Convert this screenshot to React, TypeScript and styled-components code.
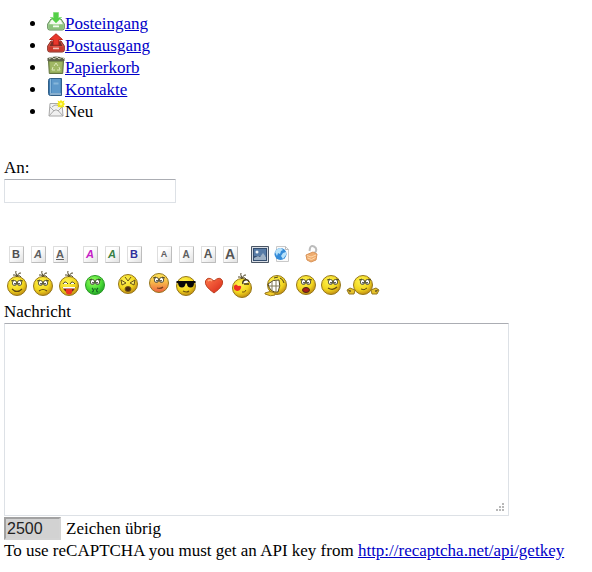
import React from 'react';
import styled, { createGlobalStyle } from 'styled-components';

const GlobalStyle = createGlobalStyle`
  body {
    margin: 0;
    background: #fff;
    color: #000;
    font-family: "Liberation Serif", "Times New Roman", serif;
    font-size: 17px;
    line-height: 22px;
  }
`;

const Page = styled.main`
  padding: 11px 4px 8px;
`;

const Folders = styled.ul`
  margin: 0;
  padding: 0 0 0 43px;
`;

const Folder = styled.li`
  height: 22px;
  white-space: nowrap;

  svg {
    width: 18px;
    height: 20px;
    vertical-align: -2px;
  }
`;

const Link = styled.a`
  color: #0000c8;
  text-decoration: underline;
`;

const Form = styled.form`
  display: flex;
  flex-direction: column;
  align-items: flex-start;
  margin-top: 36px;
`;

const Label = styled.label`
  display: block;
`;

const Recipient = styled.input`
  box-sizing: border-box;
  width: 172px;
  height: 24px;
  padding: 2px 4px;
  border: 1px solid #dde1e6;
  border-top-color: #abadb3;
  border-radius: 1px;
  font: 16px "Liberation Sans", Arial, sans-serif;
`;

const Toolbar = styled.div`
  display: flex;
  gap: 8px;
  margin-top: 40px;
  padding-left: 1px;
`;

const ToolGroup = styled.div`
  display: flex;
`;

const IconButton = styled.button<{ $width: number; $height: number }>`
  display: flex;
  justify-content: center;
  align-items: center;
  width: ${p => p.$width}px;
  height: ${p => p.$height}px;
  padding: 0;
  border: 0;
  background: none;
  cursor: pointer;
`;

const Letter = styled.span<{ $color: string; $size: number; $italic?: boolean; $underline?: boolean }>`
  box-sizing: border-box;
  width: 15px;
  height: 17px;
  border: 1px solid #dedede;
  border-right-color: #bdbdbd;
  border-bottom-color: #bdbdbd;
  border-radius: 1px;
  background: linear-gradient(135deg, #fff 35%, #e2e2e2);
  color: ${p => p.$color};
  font: ${p => (p.$italic ? 'italic' : 'normal')} bold ${p => p.$size}px/15px "Liberation Sans", Arial, sans-serif;
  text-align: center;
  text-decoration: ${p => (p.$underline ? 'underline' : 'none')};
`;

const Smileys = styled.div`
  display: flex;
  margin: 7px 0 1px;

  svg {
    flex: none;
    overflow: visible;
  }
`;

const Palette = styled.svg`
  position: absolute;
  width: 0;
  height: 0;
`;

const MessageBox = styled.div`
  position: relative;
  width: 505px;
  max-width: 100%;
`;

const Message = styled.textarea`
  display: block;
  box-sizing: border-box;
  width: 100%;
  height: 193px;
  margin: 0;
  padding: 4px;
  border: 1px solid #dde1e6;
  border-top-color: #abadb3;
  border-radius: 1px;
  resize: none;
  font: 16px "Liberation Sans", Arial, sans-serif;
`;

const Grip = styled.svg`
  position: absolute;
  right: 5px;
  bottom: 5px;
  pointer-events: none;
`;

const CounterRow = styled.div`
  display: flex;
  align-items: center;
  gap: 5px;
  margin-top: 1px;
`;

const Counter = styled.input`
  box-sizing: border-box;
  width: 57px;
  height: 23px;
  padding: 1px;
  border: 2px solid #d4d4d4;
  border-top-color: #a2a2a2;
  border-left-color: #a2a2a2;
  background: #d2d2d2;
  color: #222;
  font: 16px "Liberation Sans", Arial, sans-serif;
`;

const Notice = styled.p`
  margin: 0;
`;

function Tray({ kind }: { kind: 'in' | 'out' }) {
  const incoming = kind === 'in';
  const edge = incoming ? '#5f8b55' : '#842b20';
  return (
    <svg viewBox="0 0 18 20" aria-hidden="true">
      <path d="M4 8h10l3.3 5v4q0 2-2 2H2.7q-2 0-2-2v-4z" fill={incoming ? '#b5dda8' : '#df584b'} stroke={edge} />
      <path d="M4.5 9h9l2 4H2.5z" fill={incoming ? '#f4faf0' : '#793027'} />
      <path d="M1.5 13.5h4l1.5 2h4l1.5-2h4v3.2q0 1.3-1.3 1.3H2.8q-1.3 0-1.3-1.3z" fill={incoming ? '#8cc37c' : '#c83b2d'} />
      <path d="M6 15.500h6" stroke={incoming ? '#f2faef' : '#f0c0b5'} strokeWidth="1.500" />
      {incoming ? (
        <path d="M6.5 1.5h5v5h3L9 12 3.5 6.5h3z" fill="#55cf48" stroke="#8be080" />
      ) : (
        <path d="M6.5 12V6.5h-4L9 .8l6.5 5.7h-4V12z" fill="#e9372b" stroke="#bc281e" />
      )}
    </svg>
  );
}

function BinIcon() {
  return (
    <svg viewBox="0 0 18 20" aria-hidden="true">
      <path d="M1.5 6h15l-.8 12.5H2.3z" fill="#91a858" stroke="#647441" />
      <path d="M3 7h12l-.5 10h-11z" fill="#a0b764" />
      <path d="M.5 3q8.500-3 17 0v3H.5z" fill="#5e634b" />
      <path d="M2 4l3-2 2 2 3-2 2 2 3-2 2 2" fill="none" stroke="#d0d2bd" />
      <path d="M7 11l2-3 2 3M12 12l1 3h-3M8 15H5l1-3" fill="none" stroke="#dce7b8" />
    </svg>
  );
}

function BookIcon() {
  return (
    <svg viewBox="0 0 18 20" aria-hidden="true">
      <path d="M1.500 3.500q0-2 2-2h11v17H3.500q-2 0-2-2z" fill="#3b78ad" stroke="#315f88" />
      <path d="M4.500 2h9v14h-9z" fill="#5e99ca" />
      <path d="M6.500 5.500h5v2h-5z" fill="#86b6da" />
      <path d="M3 17h11" stroke="#d9e6ef" />
      <path d="M3.500 2v14" stroke="#8dbbdd" />
    </svg>
  );
}

function NewMailIcon() {
  return (
    <svg viewBox="0 0 18 20" aria-hidden="true">
      <path d="M3 4.500h12l1 12.500H2z" fill="#f0f0f0" stroke="#a8a8a8" />
      <path d="M2 17l4.500-5Q9 9.500 11.500 12l4.500 5M3 8l4 4M15 8l-4 4M5 8q4-4 8 0" fill="none" stroke="#aaa" />
      <path d="M14 .5l1 2 2.500-1-1 2.500 2 1-2 1 1 2.500-2.500-1-1 2-1-2-2.500 1 1-2.500-2-1 2-1-1-2.500 2.500 1z" fill="#f5e800" />
      <circle cx="14" cy="5" r="1.500" fill="#fff989" />
    </svg>
  );
}

function PictureIcon() {
  return (
    <svg width="18" height="17" aria-hidden="true">
      <path d="M.5.5h17v16H.5z" fill="#d8dde4" stroke="#4b5665" />
      <path d="M2 2h14v13H2z" fill="#344d6f" />
      <path d="M3 3h12v7H3z" fill="#577ba6" />
      <circle cx="6" cy="6" r="1.500" fill="#f1f4f5" />
      <path d="M3 12l4-2 2 1 3-4 3 4v3H3z" fill="#9eb1c5" />
    </svg>
  );
}

function WebIcon() {
  return (
    <svg width="18" height="18" aria-hidden="true">
      <path d="M3.500 1.500h9l3 3v12h-12z" fill="#fbfbfb" stroke="#c9c9c9" />
      <path d="M12.500 1.500v3h3" fill="none" stroke="#bbb" />
      <circle cx="7.500" cy="9" r="6" fill="#348bd8" />
      <path d="M2 7q2-4 6-4l2 2-2 1-1 3-2-1-1 3zM10 8l3-1v3l-3 4-2-3z" fill="#b8e2fa" />
    </svg>
  );
}

function UnlockIcon() {
  return (
    <svg width="18" height="18" aria-hidden="true">
      <path d="M11 9l2-3q1-3-2-4.500T7 3l-.5 3" fill="none" stroke="#bcbcbc" strokeWidth="2" />
      <path d="M3 10l7-3 4 2-1 6-5 2-4-2z" fill="#efad70" stroke="#d99459" />
      <path d="M4 10.500l4 1.500 5-2M4.500 13l4 1.500 4-2" fill="none" stroke="#ffd8aa" />
    </svg>
  );
}

type Mood =
  | 'smile' | 'sad' | 'tongue' | 'sick' | 'angry' | 'blush' | 'cool'
  | 'heart' | 'kiss' | 'laugh' | 'shock' | 'happy' | 'shrug';

function Eyes({ x = 13, y = 11 }: { x?: number; y?: number }) {
  return (
    <g stroke="#302f22" strokeWidth=".8">
      <ellipse cx={x - 2.5} cy={y} rx="2.200" ry="2.500" fill="#fff" />
      <ellipse cx={x + 2.5} cy={y} rx="2.200" ry="2.500" fill="#fff" />
      <path d={`M${x - 2} ${y}v1.500M${x + 2} ${y}v1.500`} strokeWidth="1.500" />
      <path d={`M${x - 6} ${y - 2}l3-1M${x + 3} ${y - 3}l3 1`} />
    </g>
  );
}

const centers: Partial<Record<Mood, number>> = {
  smile: 14, sad: 14, tongue: 14, angry: 12, blush: 11, cool: 14, kiss: 16,
};

const fills: Partial<Record<Mood, string>> = {
  sick: 'url(#green-fill)',
  blush: 'url(#blush-fill)',
};

function Smiley({ mood }: { mood: Mood }) {
  const cy = centers[mood] ?? 13;
  const green = mood === 'sick';
  const hair = ['smile', 'sad', 'tongue', 'kiss'].includes(mood);

  if (mood === 'heart') {
    return (
      <svg width="26" height="28" aria-hidden="true">
        <path d="M13 21Q3 14 4.500 9Q7 3.500 13 9Q19 3.500 21.500 9Q23 14 13 21z" fill="url(#heart-fill)" stroke="#bd4222" />
        <path d="M7 9q2-2 4 0" fill="none" stroke="#ffac82" strokeWidth="1.500" />
      </svg>
    );
  }

  return (
    <svg width="26" height="28" aria-hidden="true">
      <circle cx="13" cy={cy} r="9.500" fill={fills[mood] ?? 'url(#yellow-fill)'} stroke={green ? '#2c9a25' : '#96771b'} />
      {hair && <path d={`M13 ${cy - 9}q-1-3-4-2m4 1q-2-4-1-5m1 5q2-4 4-3m-4 3q3-1 4 1`} fill="none" stroke="#514829" />}
      {!['angry', 'cool', 'tongue', 'laugh', 'kiss'].includes(mood) && <Eyes y={cy - 3} x={mood === 'happy' || mood === 'shrug' ? 15 : 13} />}
      {mood === 'smile' && <path d="M8 17q5 5 10 0" fill="none" stroke="#61480f" strokeWidth="1.200" />}
      {mood === 'sad' && <path d="M9 19q4-3 8 0" fill="none" stroke="#61480f" strokeWidth="1.200" />}
      {mood === 'tongue' && (
        <>
          <path d="M7 12q2-4 5 0M14 12q2-4 5 0" fill="#fff" stroke="#443b1d" />
          <path d="M6.500 15h13q-1.500 5-6.500 6-5-1-6.500-6z" fill="#7d2418" />
          <path d="M7 15h12v1.500H7z" fill="#fff" />
          <path d="M10 17h6v4q-3 3-6 0z" fill="#ed3426" />
        </>
      )}
      {green && <path d="M10 16q3 3 0 4M16 16q-3 3 0 4M12 17h2" fill="none" stroke="#176623" strokeWidth="1.200" />}
      {mood === 'angry' && (
        <>
          <path d="M6 8l5 3-4 2zM20 8l-5 3 4 2z" fill="#fff06c" stroke="#65501a" />
          <path d="M10 5l3 4 3-4" fill="none" stroke="#6b5415" />
          <ellipse cx="13" cy="17" rx="3" ry="2.500" fill="#462a12" stroke="#7a591a" />
        </>
      )}
      {mood === 'blush' && <path d="M11 16q4 1 6-1" fill="none" stroke="#7b3f1e" strokeWidth="1.200" />}
      {mood === 'cool' && (
        <>
          <path d="M3.500 9h19v2H21q0 4.500-3.500 4.500T14 11.500h-1.500q-.5 4-3.500 4Q5.500 15.500 5 11H3.500z" fill="#080808" />
          <path d="M10 19q4 2 6 0" fill="none" stroke="#6a4f0e" strokeWidth="1.200" />
        </>
      )}
      {mood === 'kiss' && (
        <>
          <path d="M14 12q-1-3 2-4t4 2M15 12h5" fill="#fff" stroke="#463919" strokeWidth="1.500" />
          <path d="M5 14q2-3 4 0 4-1 3 2-1 3-4 3-4-1-3-5z" fill="#ee2f23" />
          <path d="M13 20q3 1 4-2" fill="none" stroke="#74520f" />
        </>
      )}
      {mood === 'laugh' && (
        <>
          <path d="M10 6l4-1M16 6q3 1 4 5" fill="none" stroke="#4b3e18" />
          <path d="M4 12q5-5 11-4 2 6-1 12-8 1-10-8z" fill="#fff" stroke="#514318" />
          <path d="M5 14h11M8 9v9M12 8v11" fill="none" stroke="#817958" />
          <path d="M1 21q5-3 10 0v2q-4 2-10-1z" fill="#f1cd2c" stroke="#9b7920" />
        </>
      )}
      {mood === 'shock' && <ellipse cx="13" cy="18" rx="3.500" ry="2.500" fill="#a91e18" stroke="#4c2913" />}
      {mood === 'happy' && <path d="M10 16q5 3 9-1" fill="none" stroke="#61480f" strokeWidth="1.200" />}
      {mood === 'shrug' && (
        <>
          <path d="M11 17q3 2 6-1" fill="none" stroke="#61480f" />
          <path d="M5 18l-5-2-3 2 2 4h5zM21 18l5-2 3 2-2 4h-5z" fill="#e7c32a" stroke="#94761c" />
          <path d="M-2 18l3 1-2 1M28 18l-3 1 2 1" fill="none" stroke="#725e24" />
        </>
      )}
    </svg>
  );
}

const smileys: { mood: Mood; name: string; width: number }[] = [
  { mood: 'smile', name: 'Lächeln', width: 26 },
  { mood: 'sad', name: 'Traurig', width: 26 },
  { mood: 'tongue', name: 'Zunge', width: 26 },
  { mood: 'sick', name: 'Krank', width: 26 },
  { mood: 'angry', name: 'Wütend', width: 40 },
  { mood: 'blush', name: 'Verlegen', width: 22 },
  { mood: 'cool', name: 'Cool', width: 32 },
  { mood: 'heart', name: 'Herz', width: 24 },
  { mood: 'kiss', name: 'Kuss', width: 32 },
  { mood: 'laugh', name: 'Lachen', width: 38 },
  { mood: 'shock', name: 'Erschrocken', width: 20 },
  { mood: 'happy', name: 'Fröhlich', width: 30 },
  { mood: 'shrug', name: 'Schulterzucken', width: 34 },
];

const letterGroups = [
  [
    { name: 'Fett', text: 'B', color: '#505050', size: 11 },
    { name: 'Kursiv', text: 'A', color: '#606060', size: 11, italic: true },
    { name: 'Unterstrichen', text: 'A', color: '#606060', size: 11, underline: true },
  ],
  [
    { name: 'Magenta', text: 'A', color: '#c51cc5', size: 11, italic: true },
    { name: 'Grün', text: 'A', color: '#388044', size: 11, italic: true },
    { name: 'Blau', text: 'B', color: '#30309b', size: 11 },
  ],
  [
    { name: 'Klein', text: 'A', color: '#606060', size: 9 },
    { name: 'Normal', text: 'A', color: '#606060', size: 10 },
    { name: 'Groß', text: 'A', color: '#555', size: 12 },
    { name: 'Sehr groß', text: 'A', color: '#555', size: 14 },
  ],
];

export default function App() {
  return (
    <>
      <GlobalStyle />
      <Palette aria-hidden="true">
        <defs>
          <radialGradient id="yellow-fill" cx=".4" cy=".3" r=".7">
            <stop stopColor="#fff452" /><stop offset=".65" stopColor="#f1d51e" /><stop offset="1" stopColor="#c39014" />
          </radialGradient>
          <radialGradient id="green-fill" cx=".4" cy=".3" r=".7">
            <stop stopColor="#9cff62" /><stop offset=".65" stopColor="#4adb35" /><stop offset="1" stopColor="#24a62a" />
          </radialGradient>
          <linearGradient id="blush-fill" x1="0" y1="0" x2="0" y2="1">
            <stop stopColor="#ffe65b" /><stop offset=".4" stopColor="#f9c34a" /><stop offset="1" stopColor="#ed6042" />
          </linearGradient>
          <linearGradient id="heart-fill" x1="0" y1="0" x2="1" y2="1">
            <stop stopColor="#ff794a" /><stop offset="1" stopColor="#d62518" />
          </linearGradient>
        </defs>
      </Palette>
      <Page>
        <nav>
          <Folders>
            <Folder><Tray kind="in" /><Link href="#posteingang">Posteingang</Link></Folder>
            <Folder><Tray kind="out" /><Link href="#postausgang">Postausgang</Link></Folder>
            <Folder><BinIcon /><Link href="#papierkorb">Papierkorb</Link></Folder>
            <Folder><BookIcon /><Link href="#kontakte">Kontakte</Link></Folder>
            <Folder><NewMailIcon />Neu</Folder>
          </Folders>
        </nav>
        <Form onSubmit={event => event.preventDefault()}>
          <Label htmlFor="recipient">An:</Label>
          <Recipient id="recipient" type="text" />
          <Toolbar role="toolbar" aria-label="Formatierung">
            {letterGroups.map((group, index) => (
              <ToolGroup key={index}>
                {group.map(({ name, text, color, size, ...look }) => (
                  <IconButton key={name} type="button" aria-label={name} $width={22} $height={22}>
                    <Letter
                      $color={color}
                      $size={size}
                      $italic={'italic' in look}
                      $underline={'underline' in look}
                    >
                      {text}
                    </Letter>
                  </IconButton>
                ))}
              </ToolGroup>
            ))}
            <ToolGroup>
              <IconButton type="button" aria-label="Bild" $width={22} $height={22}><PictureIcon /></IconButton>
              <IconButton type="button" aria-label="Link" $width={22} $height={22}><WebIcon /></IconButton>
            </ToolGroup>
            <ToolGroup>
              <IconButton type="button" aria-label="Tags schließen" $width={22} $height={22}><UnlockIcon /></IconButton>
            </ToolGroup>
          </Toolbar>
          <Smileys role="toolbar" aria-label="Smileys">
            {smileys.map(({ mood, name, width }) => (
              <IconButton key={mood} type="button" aria-label={name} $width={width} $height={28}>
                <Smiley mood={mood} />
              </IconButton>
            ))}
          </Smileys>
          <Label htmlFor="message">Nachricht</Label>
          <MessageBox>
            <Message id="message" />
            <Grip width="8" height="8" aria-hidden="true">
              <path d="M6 0h2v2H6zM3 3h2v2H3zM6 3h2v2H6zM0 6h2v2H0zM3 6h2v2H3zM6 6h2v2H6z" fill="#b8b8b8" />
            </Grip>
          </MessageBox>
          <CounterRow>
            <Counter id="remaining" type="text" readOnly value="2500" />
            <Label htmlFor="remaining">Zeichen übrig</Label>
          </CounterRow>
          <Notice>
            To use reCAPTCHA you must get an API key from{' '}
            <Link href="http://recaptcha.net/api/getkey">http://recaptcha.net/api/getkey</Link>
          </Notice>
        </Form>
      </Page>
    </>
  );
}
